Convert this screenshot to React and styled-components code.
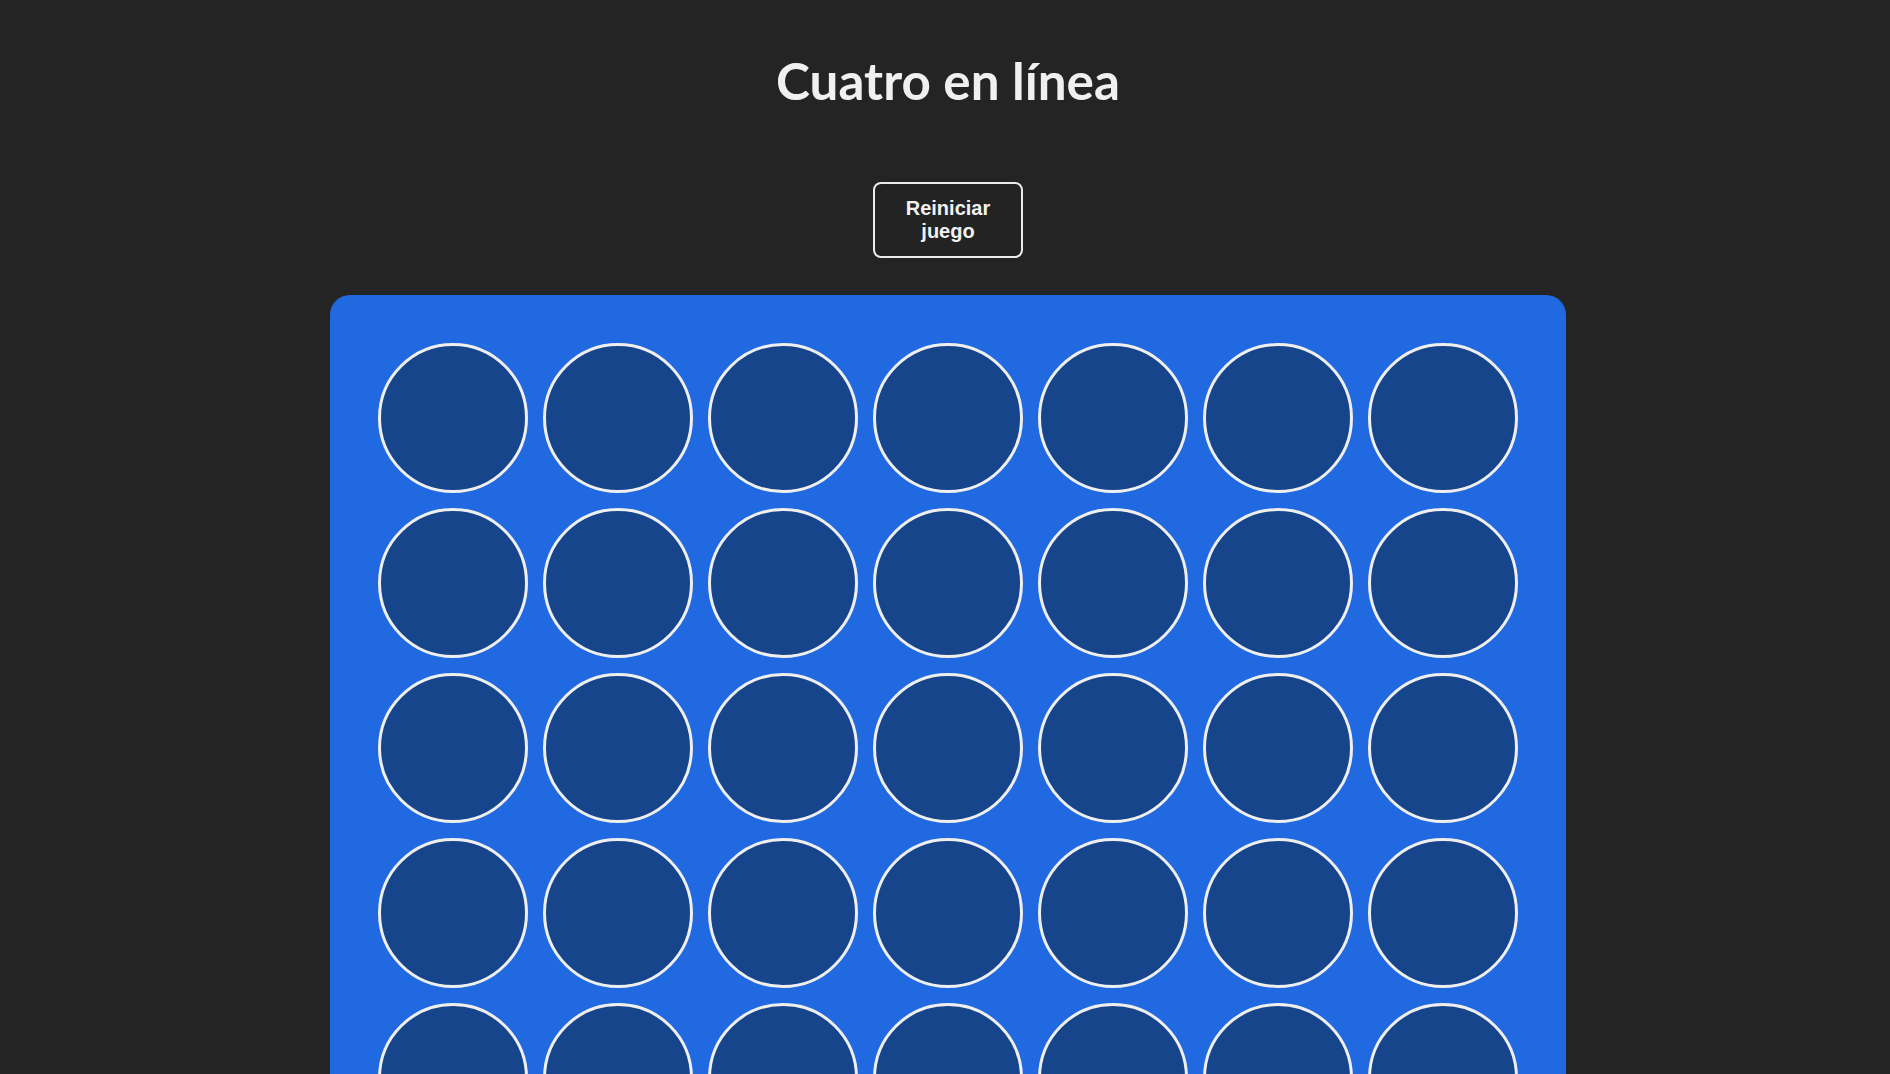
import React from "react";
import styled, { createGlobalStyle } from "styled-components";

const Global = createGlobalStyle`
  html, body { margin: 0; padding: 0; background: #242424; }
  body { font-family: "Open Sans", "Noto Sans", sans-serif; color: rgba(255,255,255,0.92); }
`;

const Page = styled.main`
  display: flex;
  flex-direction: column;
  align-items: center;
  padding-left: 6px;
  min-height: 100vh;
`;

const Title = styled.h1`
  margin: 52px 0 0;
  font-family: Lato, "Open Sans", sans-serif;
  font-size: 51.2px;
  line-height: 56px;
  font-weight: 700;
  color: #f0f0f0;
`;

const ResetButton = styled.button`
  margin-top: 74px;
  width: 150px;
  box-sizing: border-box;
  padding: 13px 20px;
  border: 2px solid #ececec;
  border-radius: 8px;
  background: #232323;
  color: #f2f2f2;
  font-family: "Liberation Sans", Arial, sans-serif;
  font-weight: 700;
  font-size: 20px;
  line-height: 23px;
  cursor: pointer;
`;

const Board = styled.div`
  margin-top: 37px;
  display: grid;
  grid-template-columns: repeat(7, 150px);
  gap: 15px;
  padding: 48px;
  background: #2069e0;
  border-radius: 20px;
`;

const Cell = styled.div`
  width: 150px;
  height: 150px;
  box-sizing: border-box;
  border-radius: 50%;
  border: 3px solid #efefef;
  background: ${(p) => (p.$player === 1 ? "#e33" : p.$player === 2 ? "#ee3" : "#17458c")};
`;

const cells = Array.from({ length: 42 }, (_, i) => i);

export default function App() {
  return (
    <>
      <Global />
      <Page>
        <Title>Cuatro en línea</Title>
        <ResetButton>Reiniciar juego</ResetButton>
        <Board>
          {cells.map((i) => (
            <Cell key={i} $player={0} />
          ))}
        </Board>
      </Page>
    </>
  );
}
